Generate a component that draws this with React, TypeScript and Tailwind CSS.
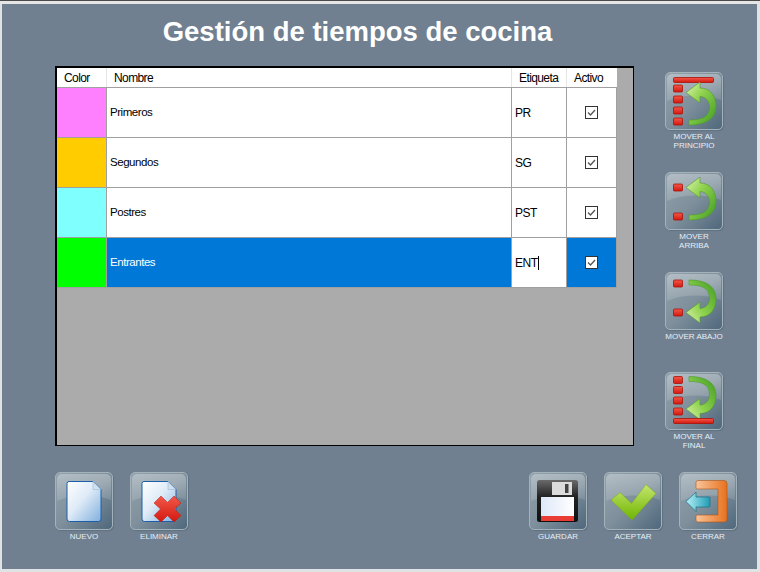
import type { ReactNode } from 'react';

const rows = [
  { color: 'bg-[#ff80ff]', name: 'Primeros', tag: 'PR' },
  { color: 'bg-[#ffcc00]', name: 'Segundos', tag: 'SG' },
  { color: 'bg-[#80ffff]', name: 'Postres', tag: 'PST' },
  { color: 'bg-[#00ff00]', name: 'Entrantes', tag: 'ENT', selected: true },
];

function Defs() {
  return (
    <defs>
      <linearGradient id="gloss" x1="0" y1="0" x2="0" y2="1">
        <stop offset="0" stopColor="#fff" stopOpacity="0.3" />
        <stop offset="1" stopColor="#fff" stopOpacity="0.12" />
      </linearGradient>
      <linearGradient id="green" x1="0" y1="0" x2="1" y2="1">
        <stop offset="0" stopColor="#dff4b0" />
        <stop offset="0.4" stopColor="#8fd24e" />
        <stop offset="1" stopColor="#3f9a22" />
      </linearGradient>
      <linearGradient id="red" x1="0" y1="0" x2="0" y2="1">
        <stop offset="0" stopColor="#f2584a" />
        <stop offset="1" stopColor="#d4180f" />
      </linearGradient>
      <linearGradient id="doc" x1="0" y1="0" x2="1" y2="1">
        <stop offset="0" stopColor="#ffffff" />
        <stop offset="0.45" stopColor="#dfebf7" />
        <stop offset="1" stopColor="#7fafdd" />
      </linearGradient>
      <linearGradient id="check" x1="0" y1="0" x2="0" y2="1">
        <stop offset="0" stopColor="#c4e66e" />
        <stop offset="1" stopColor="#6fb400" />
      </linearGradient>
      <linearGradient id="orange" x1="0" y1="0" x2="1" y2="0">
        <stop offset="0" stopColor="#f8c49a" />
        <stop offset="1" stopColor="#e8721e" />
      </linearGradient>
      <linearGradient id="cyan" x1="0" y1="0" x2="1" y2="0">
        <stop offset="0" stopColor="#b6f0f6" />
        <stop offset="1" stopColor="#1f9cb4" />
      </linearGradient>
      <linearGradient id="label" x1="0" y1="0" x2="1" y2="0">
        <stop offset="0" stopColor="#dde8f8" />
        <stop offset="1" stopColor="#ffffff" />
      </linearGradient>
      <linearGradient id="disk" x1="0" y1="0" x2="0" y2="1">
        <stop offset="0" stopColor="#6a6a6a" />
        <stop offset="0.4" stopColor="#222222" />
        <stop offset="1" stopColor="#111111" />
      </linearGradient>
    </defs>
  );
}

function Tile({ children }: { children: ReactNode }) {
  return (
    <div className="h-[58px] w-[58px] rounded-[5px] border border-[#a4b2bb] bg-gradient-to-br from-[#93a2ac] via-[#7f909c] to-[#4f687c] shadow-[1px_1px_1px_#5f7282]">
      <svg viewBox="0 0 56 56" className="h-[56px] w-[56px]">
        <Defs />
        <g transform="translate(-1 -1)">
          <path d="M2 7a5 5 0 0 1 5-5h44a5 5 0 0 1 5 5v21c-16-6-38-6-54 1z" fill="url(#gloss)" />
          {children}
        </g>
      </svg>
    </div>
  );
}

function Block({ y }: { y: number }) {
  return <rect x="8.5" y={y} width="9" height="7" rx="1" fill="url(#red)" stroke="#a81208" strokeWidth="0.8" />;
}

function Bar({ y }: { y: number }) {
  return <rect x="8.5" y={y} width="40" height="5" rx="1" fill="url(#red)" stroke="#a81208" strokeWidth="0.8" />;
}

const arrowPath = 'M21 20.5 L35 10 L35 16 C46 16 51 25 51 34 C51 46 42 53 24 53 L24 48 C35 48 44.5 46 44.5 35 C44.5 29 41 25 35 24.5 L35 31 Z';

function Arrow({ transform }: { transform: string }) {
  return <path d={arrowPath} transform={transform} fill="url(#green)" stroke="#4d9a2a" strokeWidth="0.6" />;
}

function Doc() {
  return (
    <>
      <path d="M14 9.5 H38 L46 17.5 V47 a2.5 2.5 0 0 1 -2.5 2.5 H14.5 a2.5 2.5 0 0 1 -2.5 -2.5 V11.5 a2 2 0 0 1 2 -2 z" fill="url(#doc)" stroke="#1c5ea8" strokeWidth="1" />
      <path d="M38 9.5 L46 17.5 H38 Z" fill="#cfe0ef" stroke="#8fb2d2" strokeWidth="0.5" />
    </>
  );
}

function IconTop() {
  return (
    <Tile>
      <Bar y={5.5} />
      <Block y={13} />
      <Block y={24} />
      <Block y={35} />
      <Block y={46} />
      <Arrow transform="translate(0 0)" />
    </Tile>
  );
}

function IconUp() {
  return (
    <Tile>
      <Block y={12} />
      <Block y={41} />
      <Arrow transform="translate(0 -5)" />
    </Tile>
  );
}

function IconDown() {
  return (
    <Tile>
      <Block y={8} />
      <Block y={37} />
      <Arrow transform="matrix(1 0 0 -1 0 61)" />
    </Tile>
  );
}

function IconBottom() {
  return (
    <Tile>
      <Block y={4.5} />
      <Block y={14.5} />
      <Block y={25} />
      <Block y={36} />
      <Arrow transform="matrix(1 0 0 -1 0 57.5)" />
      <Bar y={46.5} />
    </Tile>
  );
}

function IconNew() {
  return (
    <Tile>
      <Doc />
    </Tile>
  );
}

function IconDelete() {
  return (
    <Tile>
      <Doc />
      <path d="M24 31 L31 24 L37.5 30.5 L44 24 L51 31 L44.5 37 L51 43.5 L44 50 L37.5 43.5 L31 50 L24 43.5 L30.5 37 Z" fill="url(#red)" stroke="#b81a10" strokeWidth="0.5" />
    </Tile>
  );
}

function IconSave() {
  return (
    <Tile>
      <rect x="8" y="8" width="41" height="42" rx="2.5" fill="url(#disk)" />
      <rect x="23" y="10" width="20" height="13" fill="#dcdcdc" />
      <rect x="36" y="12" width="3.5" height="9" fill="#444" />
      <rect x="12" y="25" width="33" height="19" fill="url(#label)" />
      <rect x="12" y="44" width="33" height="5" fill="#e83c34" />
    </Tile>
  );
}

function IconAccept() {
  return (
    <Tile>
      <path d="M7 28 L16 20.5 L27.5 31.5 L42 12.5 L52 21.5 L28 48 Z" fill="url(#check)" stroke="#75aa1c" strokeWidth="0.5" />
    </Tile>
  );
}

function IconClose() {
  return (
    <Tile>
      <path d="M19 8.5 H45 a3 3 0 0 1 3 3 V47 a3 3 0 0 1 -3 3 H19 a2 2 0 0 1 -2 -2 V44.5 a1.5 1.5 0 0 1 1.5 -1.5 H39 V17 H18.5 a1.5 1.5 0 0 1 -1.5 -1.5 V10.5 a2 2 0 0 1 2 -2 z" fill="url(#orange)" stroke="#a8561c" strokeWidth="0.6" />
      <path d="M7 29.5 L17 20 V25 H30 a1 1 0 0 1 1 1 V34 a1 1 0 0 1 -1 1 H17 V39.5 Z" fill="url(#cyan)" stroke="#15708a" strokeWidth="0.7" />
    </Tile>
  );
}

function ToolButton({ icon, label }: { icon: ReactNode; label: string[] }) {
  return (
    <div className="flex w-[58px] flex-col items-center">
      {icon}
      <div className="-mx-[11px] w-[80px] pt-[2px] text-center text-[8px] leading-[9px] text-[#e6eef5]">
        {label.map((line) => (
          <div key={line}>{line}</div>
        ))}
      </div>
    </div>
  );
}

function Checkbox() {
  return (
    <div className="flex h-[13px] w-[13px] items-center justify-center border border-[#333333] bg-white">
      <svg viewBox="0 0 11 11" className="h-[11px] w-[11px]">
        <path d="M2 5.5 L4.5 8 L9 3" fill="none" stroke="#555555" strokeWidth="1.3" />
      </svg>
    </div>
  );
}

function Grid() {
  return (
    <div className="h-[380px] w-[579px] shrink-0 border-t-2 border-r border-b border-l-2 border-black bg-[#ababab] text-[11.5px] tracking-[-0.45px]">
      <div className="flex h-[20px] w-[560px] border-b border-[#a0a0a0] bg-white text-[12px] leading-[20px] tracking-[-0.6px] text-black">
        <div className="w-[50px] border-r border-[#e5e5e5] pl-[7px]">Color</div>
        <div className="w-[405px] border-r border-[#e5e5e5] pl-[7px]">Nombre</div>
        <div className="w-[55px] border-r border-[#e5e5e5] pl-[7px]">Etiqueta</div>
        <div className="w-[50px] pl-[7px]">Activo</div>
      </div>
      {rows.map((row) => (
        <div key={row.name} className={`flex h-[50px] w-[560px] ${row.selected ? 'bg-[#0078d7] text-white' : 'bg-white text-black'}`}>
          <div className={`w-[50px] border-r border-b border-[#a0a0a0] ${row.color}`} />
          <div className="flex w-[405px] items-center border-r border-b border-[#a0a0a0] pt-[1px] pl-[3px]">{row.name}</div>
          <div className="flex w-[55px] items-center border-r border-b border-[#a0a0a0] bg-white pl-[3px] text-[12px] text-black">
            {row.tag}
            {row.selected && <span className="h-[14px] w-px bg-black" />}
          </div>
          <div className="flex w-[50px] items-center justify-center border-r border-b border-[#a0a0a0]">
            <Checkbox />
          </div>
        </div>
      ))}
    </div>
  );
}

export default function App() {
  return (
    <div className="flex h-[572px] w-[760px] flex-col overflow-hidden bg-[#dfe3e6] [font-family:'Liberation_Sans',Arial,sans-serif]">
      <div className="h-[4px] border-t border-[#4a4a4a] bg-[#e6e6e6]" />
      <div className="mr-[3px] mb-[3px] ml-[2px] flex flex-1 flex-col bg-[#708090]">
        <h1 className="flex h-[62px] items-center justify-center pr-[44px] pb-[6px] text-[27.5px] font-bold text-white">
          Gestión de tiempos de cocina
        </h1>
        <div className="flex gap-[31px] pl-[53px]">
          <Grid />
          <div className="flex flex-col pt-[6px]">
            <div className="h-[100px]">
              <ToolButton icon={<IconTop />} label={['MOVER AL', 'PRINCIPIO']} />
            </div>
            <div className="h-[100px]">
              <ToolButton icon={<IconUp />} label={['MOVER', 'ARRIBA']} />
            </div>
            <div className="h-[100px]">
              <ToolButton icon={<IconDown />} label={['MOVER ABAJO']} />
            </div>
            <div>
              <ToolButton icon={<IconBottom />} label={['MOVER AL', 'FINAL']} />
            </div>
          </div>
        </div>
        <div className="mt-[22px] flex justify-between pr-[20px] pl-[53px]">
          <div className="flex gap-[17px]">
            <ToolButton icon={<IconNew />} label={['NUEVO']} />
            <ToolButton icon={<IconDelete />} label={['ELIMINAR']} />
          </div>
          <div className="flex gap-[17px]">
            <ToolButton icon={<IconSave />} label={['GUARDAR']} />
            <ToolButton icon={<IconAccept />} label={['ACEPTAR']} />
            <ToolButton icon={<IconClose />} label={['CERRAR']} />
          </div>
        </div>
      </div>
    </div>
  );
}
